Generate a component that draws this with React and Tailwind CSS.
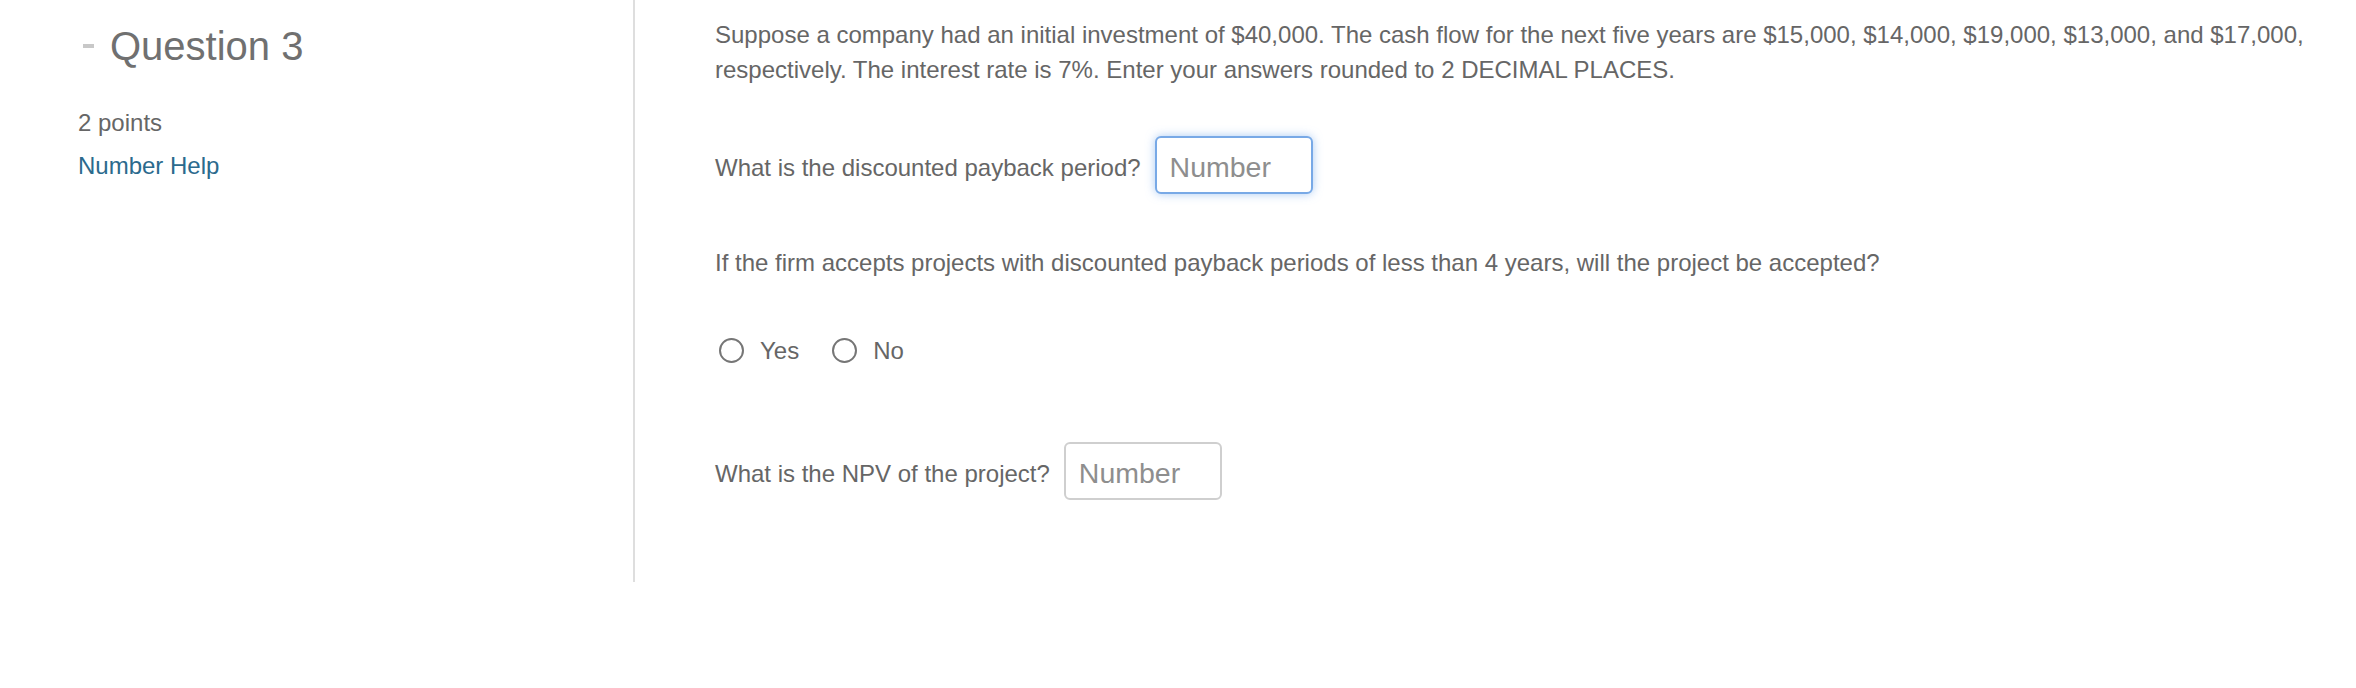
import React from 'react';

const Radio = ({ label }) => (
  <label className="flex items-center">
    <span className="h-[25px] w-[25px] rounded-full border-2 border-[#767676] bg-white" />
    <span className="ml-[16px]">{label}</span>
  </label>
);

const NumberInput = ({ focused }) => (
  <input
    type="text"
    placeholder="Number"
    className={`h-[58px] w-[158px] rounded-[6px] bg-white px-[13px] pt-[4px] text-[28.5px] text-[#555] outline-none placeholder:text-[#8e8e8e] ${
      focused
        ? 'border-2 border-[#78a9e6] shadow-[0_0_10px_rgba(102,160,233,0.55)]'
        : 'border-2 border-[#cfcfcf]'
    }`}
  />
);

export default function App() {
  return (
    <div className="flex min-h-[688px] w-full bg-white font-['Liberation_Sans',Arial,sans-serif] text-[24px] leading-[34.5px] text-[#666]">
      {/* left column */}
      <aside className="w-[633px] shrink-0 pl-[78px] pt-[22px]">
        <div className="flex items-center">
          <div className="ml-[5px] h-[4px] w-[11px] bg-[#c8c8c8]" />
          <h2 className="ml-[16px] text-[40px] leading-[48px] text-[#707070]">Question 3</h2>
        </div>
        <p className="mt-[36px]">2 points</p>
        <a href="#" className="mt-[8px] block text-[#2b6a8d]">Number Help</a>
      </aside>

      {/* right column */}
      <main className="h-[582px] border-l-2 border-[#dedede] pl-[80px] pt-[18px]">
        <p className="max-w-[1600px]">
          Suppose a company had an initial investment of $40,000. The cash flow for the next five years are $15,000, $14,000,
          $19,000, $13,000, and $17,000, respectively. The interest rate is 7%. Enter your answers rounded to 2 DECIMAL PLACES.
        </p>

        <div className="mt-[49px] flex items-center gap-[14px]">
          <span className="translate-y-[3px]">What is the discounted payback period?</span>
          <NumberInput focused />
        </div>

        <p className="mt-[52px]">
          If the firm accepts projects with discounted payback periods of less than 4 years, will the project be accepted?
        </p>

        <div className="mt-[53px] flex items-center gap-[33px] pl-[4px]">
          <Radio label="Yes" />
          <Radio label="No" />
        </div>

        <div className="mt-[74px] flex items-center gap-[14px]">
          <span className="translate-y-[3px]">What is the NPV of the project?</span>
          <NumberInput />
        </div>
      </main>
    </div>
  );
}
